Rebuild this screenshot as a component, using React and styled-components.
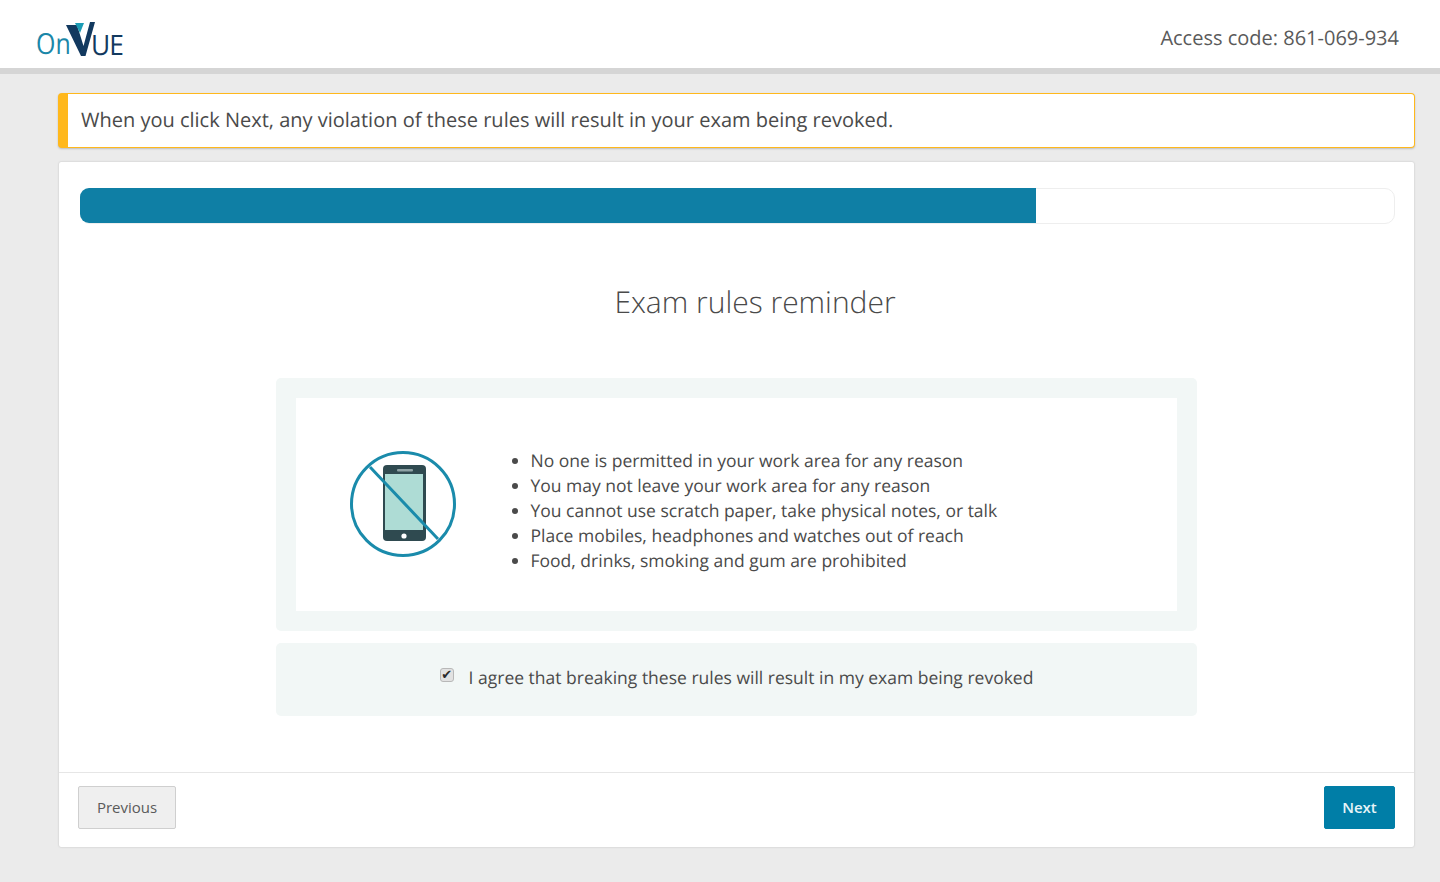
import React from 'react';
import styled, { createGlobalStyle } from 'styled-components';

const GlobalStyle = createGlobalStyle`
    html, body {
        margin: 0;
        padding: 0;
        background: #ebebeb;
        font-family: "Open Sans", "Liberation Sans", sans-serif;
        color: #4a4a4a;
        text-rendering: geometricPrecision;
    }
`;

const Page = styled.div`
    height: 882px;
    overflow: hidden;
`;

const Header = styled.header`
    height: 68px;
    background: #fff;
    border-bottom: 6px solid #d5d5d5;
    display: flex;
    justify-content: space-between;
    padding: 0 41px 0 36px;
`;

const Logo = styled.div`
    display: flex;
    align-items: flex-end;
    height: 57px;
    line-height: 1;
`;

const LogoOn = styled.span`
    font-size: 29px;
    font-weight: 400;
    color: #1a87a8;
    transform: scaleX(0.86);
    transform-origin: left bottom;
    width: 30px;
    margin-bottom: -1px;
`;

const LogoUe = styled.span`
    font-size: 28px;
    font-weight: 400;
    color: #12395f;
    transform: scaleX(0.94);
    transform-origin: left bottom;
    letter-spacing: -1px;
    margin-left: -5px;
    margin-bottom: -2px;
`;

const LogoMark = styled.svg`
    width: 30px;
    height: 35px;
    flex: none;
`;

const AccessCode = styled.div`
    font-size: 20px;
    line-height: 27px;
    color: #5a5a5a;
    margin-top: 24px;
`;

const Main = styled.main`
    padding: 19px 25px 0 58px;
`;

const Alert = styled.div`
    box-sizing: border-box;
    height: 55px;
    background: #fff;
    border: 1px solid #ffb81c;
    border-left: 10px solid #ffb81c;
    border-radius: 4px;
    box-shadow: 0 1px 2px rgba(0, 0, 0, 0.2);
    padding-left: 13px;
    font-size: 20px;
    line-height: 52px;
    color: #4a4a4a;
`;

const Card = styled.section`
    box-sizing: border-box;
    height: 685px;
    margin: 14px 1px 0;
    background: #fff;
    border-radius: 2px;
    box-shadow: 0 0 2px rgba(0, 0, 0, 0.22);
    display: flex;
    flex-direction: column;
`;

const Body = styled.div`
    flex: 1;
    padding: 26px 19px 0 21px;
`;

const Progress = styled.div`
    box-sizing: border-box;
    height: 36px;
    border: 1px solid #eeeeee;
    border-radius: 10px;
`;

const ProgressFill = styled.div`
    height: 35px;
    margin: -1px 0 0 -1px;
    background: #0f7fa5;
    border-radius: 9px 0 0 9px;
`;

const Title = styled.h1`
    margin: 58px 0 0 35px;
    text-align: center;
    font-size: 30px;
    line-height: 40px;
    font-weight: 300;
    color: #4a4a4a;
`;

const Panel = styled.div`
    box-sizing: border-box;
    width: 921px;
    margin: 0 0 12px 196px;
    background: #f2f7f6;
    border-radius: 5px;
`;

const RulesPanel = styled(Panel)`
    margin-top: 56px;
    padding: 20px;
`;

const RulesInner = styled.div`
    height: 213px;
    background: #fff;
    display: flex;
    align-items: center;
    padding-left: 54px;
`;

const PhoneIcon = styled.svg`
    width: 108px;
    height: 108px;
    flex: none;
`;

const RulesList = styled.ul`
    margin: 14px 0 0 44.5px;
    padding: 0 0 0 28px;
    font-size: 17.5px;
    line-height: 25px;
    color: #4a4a4a;
`;

const AgreePanel = styled(Panel)`
    height: 73px;
    display: flex;
    align-items: center;
    justify-content: center;
    padding-bottom: 4px;
    font-size: 17.5px;
    color: #4a4a4a;
`;

const Check = styled.input`
    appearance: none;
    box-sizing: border-box;
    width: 14px;
    height: 14px;
    margin: 0 15px 6px 0;
    display: flex;
    align-items: center;
    justify-content: center;
    background: #e2e2e2;
    border: 1px solid #b8b8b8;
    border-radius: 3px;
    &:checked::before {
        content: '✔';
        font-family: "DejaVu Sans", sans-serif;
        font-size: 13px;
        line-height: 1;
        color: #2b2b2b;
    }
`;

const Footer = styled.footer`
    box-sizing: border-box;
    height: 75px;
    border-top: 1px solid #e6e6e6;
    display: flex;
    justify-content: space-between;
    padding: 13px 19px 0;
`;

const Button = styled.button`
    box-sizing: border-box;
    height: 43px;
    padding: 0 0 2px;
    border-radius: 2px;
    font-family: inherit;
    font-size: 15px;
    cursor: pointer;
    border: 1px solid ${props => props.primary ? '#007ea7' : '#cfcfcf'};
    background: ${props => props.primary ? '#007ea7' : '#efefef'};
    color: ${props => props.primary ? '#e8f4f8' : '#5a5a5a'};
    font-weight: ${props => props.primary ? 600 : 400};
    width: ${props => props.primary ? '71px' : '98px'};
`;

const rules = [
    'No one is permitted in your work area for any reason',
    'You may not leave your work area for any reason',
    'You cannot use scratch paper, take physical notes, or talk',
    'Place mobiles, headphones and watches out of reach',
    'Food, drinks, smoking and gum are prohibited',
];

const App = () => (
    <Page>
        <GlobalStyle />
        <Header>
            <Logo>
                <LogoOn>On</LogoOn>
                <LogoMark viewBox="0 0 30 35">
                    <polygon points="0,3 11,3 17.5,24 24,0 29,0 19.5,34 15,34" fill="#12395f" />
                    <polygon points="9,1 18,1 14,11" fill="#1b9cb5" />
                </LogoMark>
                <LogoUe>UE</LogoUe>
            </Logo>
            <AccessCode>Access code: 861-069-934</AccessCode>
        </Header>
        <Main>
            <Alert>When you click Next, any violation of these rules will result in your exam being revoked.</Alert>
            <Card>
                <Body>
                    <Progress>
                        <ProgressFill style={{ width: `${(956 / 1313) * 100}%` }} />
                    </Progress>
                    <Title>Exam rules reminder</Title>
                    <RulesPanel>
                        <RulesInner>
                            <PhoneIcon viewBox="0 0 108 108">
                                <rect x="33" y="14" width="43" height="76" rx="4" fill="#2f4a50" />
                                <rect x="35" y="23" width="38" height="56" fill="#aedcd5" />
                                <rect x="47" y="18" width="16" height="2.5" rx="1" fill="#8fa3a6" />
                                <circle cx="54" cy="85" r="2.6" fill="#fff" />
                                <circle cx="53" cy="53" r="51.5" fill="none" stroke="#1a8bab" strokeWidth="3" />
                                <line x1="20" y1="16" x2="88" y2="88" stroke="#1a8bab" strokeWidth="3" />
                            </PhoneIcon>
                            <RulesList>
                                {rules.map(rule => <li key={rule}>{rule}</li>)}
                            </RulesList>
                        </RulesInner>
                    </RulesPanel>
                    <AgreePanel>
                        <Check type="checkbox" defaultChecked />
                        I agree that breaking these rules will result in my exam being revoked
                    </AgreePanel>
                </Body>
                <Footer>
                    <Button>Previous</Button>
                    <Button primary>Next</Button>
                </Footer>
            </Card>
        </Main>
    </Page>
);

export default App;
